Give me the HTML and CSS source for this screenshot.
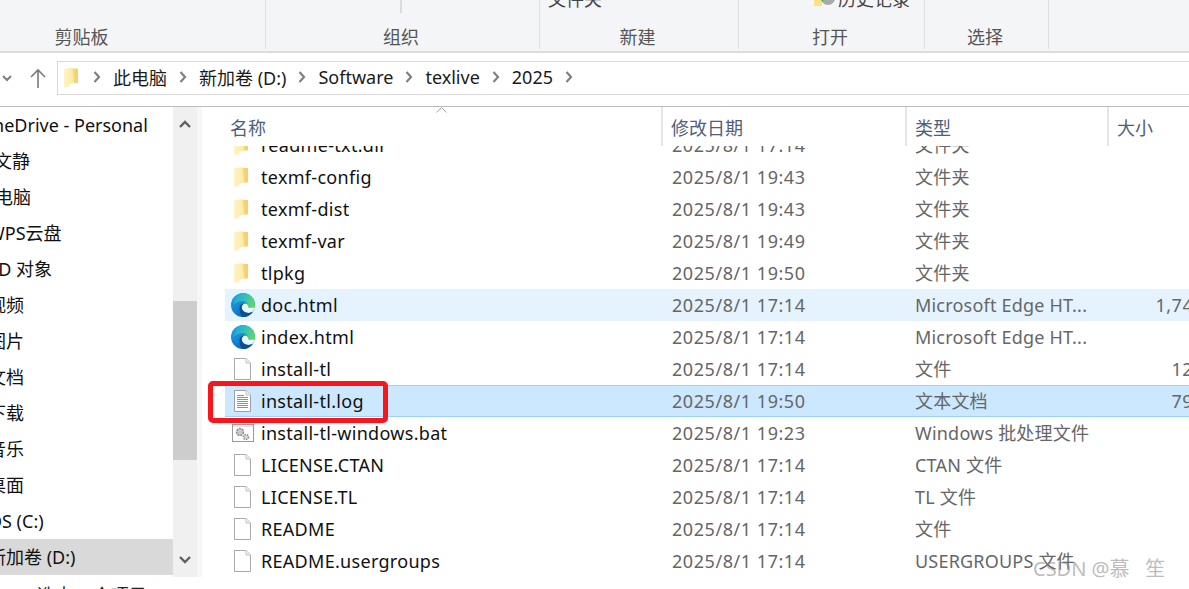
FILE: index.html
```html
<!DOCTYPE html>
<html lang="zh-CN">

<head>
    <meta charset="UTF-8">
    <title>2025 - 文件资源管理器</title>
    <link rel="stylesheet" href="styles.css">
</head>

<body>
    <svg class="defs" width="0" height="0">
        <defs>
            <linearGradient id="folderBack" x1="0" y1="0" x2="1" y2="0">
                <stop offset="0" stop-color="#fbe08e"/>
                <stop offset="1" stop-color="#f4cf68"/>
            </linearGradient>
            <linearGradient id="folderLeaf" x1="0" y1="0" x2="1" y2="0">
                <stop offset="0" stop-color="#fff3c4"/>
                <stop offset="1" stop-color="#fde9a4"/>
            </linearGradient>
            <linearGradient id="edgeBlue" x1="0" y1="0" x2="0.5" y2="1">
                <stop offset="0" stop-color="#22a7e6"/>
                <stop offset="0.7" stop-color="#1280d0"/>
                <stop offset="1" stop-color="#0f64b0"/>
            </linearGradient>
            <linearGradient id="edgeGreen" x1="0" y1="0.3" x2="1" y2="0.6">
                <stop offset="0" stop-color="#1fa6e0"/>
                <stop offset="0.55" stop-color="#36c2b4"/>
                <stop offset="1" stop-color="#66d860"/>
            </linearGradient>
            <symbol id="folder" viewBox="0 0 14 20">
                <path d="M5 1 H14 V15.500 H5 Z" fill="url(#folderBack)"/>
                <path d="M0 1.500 L8.500 0 L10 15.500 L5 16.500 V19 L0 20 Z" fill="url(#folderLeaf)"/>
            </symbol>
            <symbol id="edge" viewBox="0 0 24 24">
                <circle cx="12" cy="12" r="12" fill="url(#edgeBlue)"/>
                <path d="M12 0 C19 0 24 5.500 24 12.500 C24 14 23 14.800 21 14.800 L17 14.800 C18 11 15 8 11 8 C8 8 5 9.500 2.500 12 C3.500 5 7.500 0 12 0 Z" fill="url(#edgeGreen)"/>
                <path d="M13.500 10.500 C16 10.500 17.500 12 17.500 14.800 L24 14.500 L22 18.500 C19 21 13.500 20 11.500 17 C10 14.500 10.500 12 13.500 10.500 Z" fill="#eaf6fb"/>
                <path d="M8.500 15 C8.500 11.500 11 10 13.500 10.500 C10.500 12 10 14.500 11.500 17 C13.500 20 19 21 22 18.500 C20 22 16 24 12 24 C9.500 23.500 8.500 19 8.500 15 Z" fill="#0b4e94"/>
            </symbol>
            <symbol id="blank" viewBox="0 0 17 22">
                <path d="M0.500 0.500 H12 L16.500 5 V21.500 H0.500 Z" fill="#fff" stroke="#a9a9a9"/>
                <path d="M12 0.500 V5 H16.500" fill="#f0f0f0" stroke="#c4c4c4"/>
            </symbol>
            <symbol id="textdoc" viewBox="0 0 17 22">
                <path d="M0.500 0.500 H12 L16.500 5 V21.500 H0.500 Z" fill="#fff" stroke="#a0a0a0"/>
                <path d="M12 0.500 V5 H16.500" fill="#eee" stroke="#c4c4c4"/>
                <path d="M3 5.500 H10 M3 7.500 H14 M3 9.500 H14 M3 11.500 H14 M3 13.500 H14 M3 15.500 H14 M3 17.500 H14" stroke="#8f8f8f"/>
            </symbol>
            <symbol id="batch" viewBox="0 0 22 18">
                <rect x="0.500" y="0.500" width="21" height="17" fill="#fff" stroke="#9a9a9a"/>
                <path d="M1 1 H21 V3 H1 Z" fill="#e2e2e2"/>
                <circle cx="8" cy="8" r="3.500" fill="#c9c9c9" stroke="#8a8a8a" stroke-width="1.500" stroke-dasharray="2 1"/>
                <circle cx="14" cy="13" r="2.500" fill="#d8d8d8" stroke="#8a8a8a" stroke-width="1.500" stroke-dasharray="1.500 1"/>
            </symbol>
            <symbol id="crumb" viewBox="0 0 8 12">
                <path d="M1.500 1 L6 6 L1.500 11" fill="none" stroke="#808080" stroke-width="2.200"/>
            </symbol>
        </defs>
    </svg>

    <div class="window">
        <header class="ribbon">
            <div class="group group-clip">
                <span class="group-label">剪贴板</span>
            </div>
            <div class="group group-organize">
                <span class="short-sep"></span>
                <span class="group-label">组织</span>
            </div>
            <div class="group group-new">
                <span class="top-cmd top-cmd-new">文件夹</span>
                <span class="group-label">新建</span>
            </div>
            <div class="group group-open">
                <span class="top-cmd top-cmd-open">
                    <svg width="21" height="14" viewBox="0 0 21 14">
                        <rect x="0" y="0" width="8" height="14" fill="#ffe08a"/>
                        <circle cx="14" cy="6" r="7" fill="#a9a9a9"/>
                        <path d="M3 4.500 L9 0 V3 H13 V6.500 H9 V9.500 Z" fill="#2fa82f"/>
                    </svg>
                    历史记录
                </span>
                <span class="group-label">打开</span>
            </div>
            <div class="group group-select">
                <span class="group-label">选择</span>
            </div>
        </header>

        <nav class="navbar">
            <svg class="nav-down" width="10" height="8" viewBox="0 0 10 8"><path d="M1 2 L5 6 L9 2" fill="none" stroke="#7f7f7f" stroke-width="2"/></svg>
            <svg class="nav-up" width="18" height="20" viewBox="0 0 18 20"><path d="M9 20 V2 M2 9 L9 2 L16 9" fill="none" stroke="#7a7a7a" stroke-width="1.600"/></svg>
            <div class="address">
                <svg class="address-folder" width="14" height="21"><use href="#folder"/></svg>
                <svg class="crumb-sep" width="8" height="12"><use href="#crumb"/></svg>
                <span>此电脑</span>
                <svg class="crumb-sep" width="8" height="12"><use href="#crumb"/></svg>
                <span>新加卷 (D:)</span>
                <svg class="crumb-sep" width="8" height="12"><use href="#crumb"/></svg>
                <span>Software</span>
                <svg class="crumb-sep" width="8" height="12"><use href="#crumb"/></svg>
                <span>texlive</span>
                <svg class="crumb-sep" width="8" height="12"><use href="#crumb"/></svg>
                <span>2025</span>
                <svg class="crumb-sep" width="8" height="12"><use href="#crumb"/></svg>
            </div>
        </nav>

        <div class="main">
            <aside class="sidebar">
                <ul class="tree">
                    <li class="tree-item tree-drive">OneDrive - Personal</li>
                    <li class="tree-item tree-user">文静</li>
                    <li class="tree-item tree-root">此电脑</li>
                    <li class="tree-item">WPS云盘</li>
                    <li class="tree-item">3D 对象</li>
                    <li class="tree-item">视频</li>
                    <li class="tree-item">图片</li>
                    <li class="tree-item">文档</li>
                    <li class="tree-item">下载</li>
                    <li class="tree-item">音乐</li>
                    <li class="tree-item">桌面</li>
                    <li class="tree-item">OS (C:)</li>
                    <li class="tree-item active">新加卷 (D:)</li>
                </ul>
                <div class="scrollbar">
                    <div class="scroll-btn">
                        <svg width="12" height="8" viewBox="0 0 12 8"><path d="M1 7 L6 2 L11 7" fill="none" stroke="#606060" stroke-width="2.400"/></svg>
                    </div>
                    <div class="scroll-thumb"></div>
                    <div class="scroll-rest"></div>
                    <div class="scroll-btn">
                        <svg width="12" height="8" viewBox="0 0 12 8"><path d="M1 1 L6 6 L11 1" fill="none" stroke="#606060" stroke-width="2.400"/></svg>
                    </div>
                </div>
            </aside>

            <section class="files">
                <div class="file-head">
                    <div class="head-cell head-name">
                        名称
                        <svg class="sort-arrow" width="11" height="6" viewBox="0 0 11 6"><path d="M0.500 5.500 L5.500 0.700 L10.500 5.500" fill="none" stroke="#a0a0a0"/></svg>
                    </div>
                    <div class="head-cell">修改日期</div>
                    <div class="head-cell">类型</div>
                    <div class="head-cell">大小</div>
                </div>
                <div class="file-list">
                    <div class="file-rows">
                        <div class="row"><span class="name"><svg class="icon icon-folder" width="14" height="20"><use href="#folder"/></svg>readme-txt.dir</span><span class="date">2025/8/1 17:14</span><span class="type">文件夹</span><span class="size"></span></div>
                        <div class="row"><span class="name"><svg class="icon icon-folder" width="14" height="20"><use href="#folder"/></svg>texmf-config</span><span class="date">2025/8/1 19:43</span><span class="type">文件夹</span><span class="size"></span></div>
                        <div class="row"><span class="name"><svg class="icon icon-folder" width="14" height="20"><use href="#folder"/></svg>texmf-dist</span><span class="date">2025/8/1 19:43</span><span class="type">文件夹</span><span class="size"></span></div>
                        <div class="row"><span class="name"><svg class="icon icon-folder" width="14" height="20"><use href="#folder"/></svg>texmf-var</span><span class="date">2025/8/1 19:49</span><span class="type">文件夹</span><span class="size"></span></div>
                        <div class="row"><span class="name"><svg class="icon icon-folder" width="14" height="20"><use href="#folder"/></svg>tlpkg</span><span class="date">2025/8/1 19:50</span><span class="type">文件夹</span><span class="size"></span></div>
                        <div class="row hover"><span class="name"><svg class="icon icon-edge" width="24" height="24"><use href="#edge"/></svg>doc.html</span><span class="date">2025/8/1 17:14</span><span class="type">Microsoft Edge HT...</span><span class="size">1,746 KB</span></div>
                        <div class="row"><span class="name"><svg class="icon icon-edge" width="24" height="24"><use href="#edge"/></svg>index.html</span><span class="date">2025/8/1 17:14</span><span class="type">Microsoft Edge HT...</span><span class="size"></span></div>
                        <div class="row"><span class="name"><svg class="icon icon-file" width="17" height="22"><use href="#blank"/></svg>install-tl</span><span class="date">2025/8/1 17:14</span><span class="type">文件</span><span class="size">123 KB</span></div>
                        <div class="row selected"><span class="name"><svg class="icon icon-file" width="17" height="22"><use href="#textdoc"/></svg>install-tl.log</span><span class="date">2025/8/1 19:50</span><span class="type">文本文档</span><span class="size">794 KB</span></div>
                        <div class="row"><span class="name"><svg class="icon icon-bat" width="22" height="18"><use href="#batch"/></svg>install-tl-windows.bat</span><span class="date">2025/8/1 19:23</span><span class="type">Windows 批处理文件</span><span class="size"></span></div>
                        <div class="row"><span class="name"><svg class="icon icon-file" width="17" height="22"><use href="#blank"/></svg>LICENSE.CTAN</span><span class="date">2025/8/1 17:14</span><span class="type">CTAN 文件</span><span class="size"></span></div>
                        <div class="row"><span class="name"><svg class="icon icon-file" width="17" height="22"><use href="#blank"/></svg>LICENSE.TL</span><span class="date">2025/8/1 17:14</span><span class="type">TL 文件</span><span class="size"></span></div>
                        <div class="row"><span class="name"><svg class="icon icon-file" width="17" height="22"><use href="#blank"/></svg>README</span><span class="date">2025/8/1 17:14</span><span class="type">文件</span><span class="size"></span></div>
                        <div class="row"><span class="name"><svg class="icon icon-file" width="17" height="22"><use href="#blank"/></svg>README.usergroups</span><span class="date">2025/8/1 17:14</span><span class="type">USERGROUPS 文件</span><span class="size"></span></div>
                    </div>
                </div>
            </section>
        </div>

        <footer class="status">选中 1 个项目 794 KB</footer>

        <!-- annotation drawn over the screenshot -->
        <div class="red-box"></div>
        <div class="watermark">CSDN @慕 &nbsp; 笙</div>
    </div>
</body>

</html>
```

FILE: styles.css
```css
* {
    box-sizing: border-box;
}

html, body {
    margin: 0;
    height: 100%;
    overflow: hidden;
}

body {
    font-family: "Noto Sans", "Noto Sans CJK SC", sans-serif;
    font-size: 18px;
    color: #111;
    background: #fff;
}

.defs {
    position: absolute;
}

.window {
    position: relative;
    width: 1189px;
    height: 589px;
    overflow: hidden;
    display: flex;
    flex-direction: column;
}

/* ribbon */
.ribbon {
    flex: none;
    height: 53px;
    display: flex;
    align-items: flex-start;
    background: #f4f5f7;
    border-bottom: 2px solid #dcdcdc;
}

.group {
    position: relative;
    flex: none;
    height: 49px;
    padding-right: 3px;
    border-right: 1px solid #dfe0e2;
    display: flex;
    justify-content: center;
    align-items: flex-end;
    color: #555;
}

.group-label {
    line-height: 26px;
    margin-bottom: -1px;
}

.group-clip {
    width: 367px;
    margin-left: -101px;
    padding-right: 1px;
}

.group-organize {
    width: 274px;
}

.group-new {
    width: 199px;
}

.group-open {
    width: 186px;
}

.group-select {
    width: 124px;
}

.short-sep {
    position: absolute;
    left: 134px;
    top: 0;
    width: 2px;
    height: 13px;
    background: #dcdcdc;
}

.top-cmd {
    position: absolute;
    top: -14px;
    line-height: 26px;
    color: #444;
    display: flex;
    align-items: center;
    gap: 3px;
}

.top-cmd-new {
    left: 8px;
}

.top-cmd-open {
    left: 75px;
}

/* address bar */
.navbar {
    flex: none;
    height: 54px;
    display: flex;
    align-items: center;
    border-bottom: 1px solid #bcbcbc;
    padding-bottom: 3px;
}

.nav-down {
    flex: none;
    margin-left: 2px;
}

.nav-up {
    flex: none;
    margin-left: 17px;
}

.address {
    flex: none;
    width: 1140px;
    height: 34px;
    margin-left: 10px;
    border: 1px solid #d9d9d9;
    display: flex;
    align-items: center;
    gap: 12px;
    padding: 0 0 2px 6px;
    color: #1a1a1a;
}

.address-folder {
    margin-right: 3px;
}

.crumb-sep {
    flex: none;
}

/* side tree */
.main {
    flex: none;
    height: 470px;
    display: flex;
}

.sidebar {
    flex: none;
    width: 202px;
    display: flex;
    border-right: 5px solid #f7f7f7;
}

.tree {
    flex: none;
    width: 173px;
    margin: 0;
    padding: 0;
    list-style: none;
}

.tree-item {
    height: 36px;
    line-height: 36px;
    text-indent: -12px;
    white-space: nowrap;
    overflow: hidden;
}

.tree-drive {
    text-indent: -21px;
}

.tree-user {
    text-indent: -6px;
}

.tree-root {
    text-indent: -23px;
}

.tree-item.active {
    background: #d9d9d9;
}

.scrollbar {
    flex: none;
    width: 24px;
    display: flex;
    flex-direction: column;
    background: #f0f0f0;
}

.scroll-btn {
    flex: none;
    height: 34px;
    display: flex;
    align-items: center;
    justify-content: center;
}

.scroll-thumb {
    flex: none;
    height: 159px;
    margin-top: 160px;
    background: #cdcdcd;
}

.scroll-rest {
    flex: 1;
}

/* file list */
.files {
    flex: 1;
    min-width: 0;
    display: flex;
    flex-direction: column;
}

.file-head {
    flex: none;
    height: 39px;
    display: grid;
    grid-template-columns: 438px 244px 202px 1fr;
    margin-left: 23px;
    color: #4c607a;
}

.head-cell {
    position: relative;
    padding: 7px 0 0 8px;
    line-height: 28px;
    border-right: 2px solid #e5e5e5;
    white-space: nowrap;
}

.head-cell:last-child {
    border-right: none;
}

.head-name {
    padding-left: 5px;
}

.sort-arrow {
    position: absolute;
    left: 211px;
    top: 0;
}

.file-list {
    flex: 1;
    min-height: 0;
    overflow: hidden;
}

.file-rows {
    margin-top: -17px;
    margin-left: 23px;
}

.row {
    height: 32px;
    width: 1008px;
    display: grid;
    grid-template-columns: 447px 243px 200px 118px;
    align-items: center;
    line-height: 30px;
    white-space: nowrap;
}

.row.hover {
    background: #e5f3ff;
}

.row.selected {
    background: #cce8ff;
    border-top: 1px solid #99d1ff;
    border-bottom: 1px solid #99d1ff;
}

.name {
    display: flex;
    align-items: center;
    padding-left: 6px;
    color: #111;
    letter-spacing: 0.3px;
}

.icon {
    flex: none;
}

.icon-edge {
    margin-right: 6px;
}

.icon-folder {
    margin: 0 13px 0 3px;
}

.icon-file {
    margin: 0 10px 0 3px;
}

.icon-bat {
    margin: 0 7px 0 1px;
}

.date,
.type,
.size {
    color: #666;
}

.date {
    letter-spacing: 0.55px;
}

.type {
    letter-spacing: 0.2px;
}

.size {
    text-align: right;
    letter-spacing: 0.5px;
}

.status {
    flex: none;
    padding: 6px 0 0 37px;
    line-height: 24px;
    color: #222;
    white-space: nowrap;
}

/* overlays */
.red-box {
    position: absolute;
    left: 208px;
    top: 381px;
    width: 180px;
    height: 42px;
    border: 5px solid #f8151b;
    border-radius: 5px;
}

.watermark {
    position: absolute;
    left: 1033px;
    top: 555px;
    font-size: 20px;
    line-height: 28px;
    color: rgba(130, 130, 130, 0.55);
    white-space: pre;
}
```
